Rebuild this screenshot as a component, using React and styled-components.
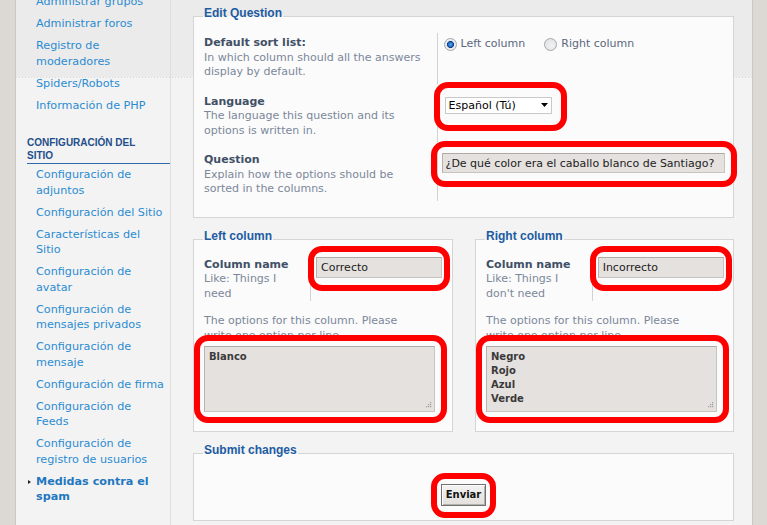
import React from 'react';
import styled, { createGlobalStyle, css } from 'styled-components';

const Global = createGlobalStyle`
  html, body { margin: 0; padding: 0; }
  body {
    font-family: "DejaVu Sans", Verdana, sans-serif;
    background: #dcd8d4;
  }
`;

const Page = styled.div`
  display: flex;
  width: 767px;
  height: 525px;
  overflow: hidden;
  background: #dcd8d4;
`;

const Gutter = styled.div`
  flex: 0 0 ${(p) => p.$w}px;
  box-sizing: border-box;
  background: #dcd8d4;
  ${(p) =>
    p.$side === 'left'
      ? 'border-right: 1px solid #cbc7c3;'
      : 'border-left: 1px solid #cbc7c3;'}
`;

const Panel = styled.div`
  flex: 1;
  display: flex;
  align-items: stretch;
  min-width: 0;
  background:
    repeating-linear-gradient(90deg, #d6d6d6 0 1px, transparent 1px 3px) 0 77px / 100% 1px no-repeat,
    linear-gradient(#ebebeb, #ebebeb) 0 0 / 100% 77px no-repeat,
    #f3f3f3;
`;

const Sidebar = styled.nav`
  flex: 0 0 155px;
  width: 155px;
  min-width: 0;
  box-sizing: border-box;
  border-right: 1px solid #dedede;
`;

const NavList = styled.ul`
  list-style: none;
  margin: -9px 0 0;
  padding: 0;
`;

const NavItem = styled.li`
  position: relative;
  padding: 3.3px 0 3.4px 20px;
  font-size: 11.2px;
  line-height: 15.4px;
  white-space: nowrap;
  color: #2b8cd2;
  ${(p) =>
    p.$active &&
    css`
      font-weight: bold;
      color: #1f78c0;
      &::before {
        content: '';
        position: absolute;
        left: 12px;
        top: 9px;
        border-left: 3px solid #222;
        border-top: 2.5px solid transparent;
        border-bottom: 2.5px solid transparent;
      }
    `}
`;

const NavHeading = styled.li`
  margin: ${(p) => p.$mt ?? 19}px 0 0 11px;
  padding-bottom: 1px;
  border-bottom: 1px solid #2e6aa8;
  font-family: "Liberation Sans", Arial, sans-serif;
  font-size: 10px;
  line-height: 13px;
  font-weight: bold;
  text-transform: uppercase;
  color: #1e4f8a;
  white-space: nowrap;
`;

const Main = styled.main`
  flex: 1;
  min-width: 0;
  padding: 6px 18px 0 22px;
`;

const Fieldset = styled.fieldset`
  margin: 0 0 11px;
  padding: ${(p) => p.$pad || '6px 10px 8px'};
  border: 1px solid #d5d5d5;
  background: #fafbfa;
  min-width: 0;
  ${(p) => p.$center && 'text-align: center;'}
`;

const Legend = styled.legend`
  padding: 0 1px 6px;
  margin-left: -1px;
  font-family: "Liberation Sans", Arial, sans-serif;
  font-size: 12px;
  line-height: 15px;
  font-weight: bold;
  color: #1d5ca3;
  text-align: left;
`;

const Columns = styled.div`
  display: grid;
  grid-template-columns: 260px 259px;
  column-gap: 22px;
`;

const Row = styled.dl`
  display: flex;
  margin: 0 0 ${(p) => p.$mb ?? 8}px;
`;

const Term = styled.dt`
  flex: 0 0 45%;
  box-sizing: border-box;
  padding: ${(p) => p.$pt ?? 3}px 0 ${(p) => p.$pb ?? 4}px;
  border-right: 1px solid #d2d2d2;
`;

const Def = styled.dd`
  flex: 1;
  min-width: 0;
  margin: 0;
  padding: ${(p) => p.$pt ?? 2}px 0 0 ${(p) => p.$pl ?? 7}px;
`;

const Label = styled.div`
  font-size: 11px;
  line-height: 14.5px;
  font-weight: bold;
  color: #425067;
`;

const Desc = styled.div`
  font-size: 11px;
  line-height: 14.5px;
  color: #7c879b;
`;

const Note = styled.p`
  margin: ${(p) => p.$mt ?? 13}px 0 0;
  font-size: 11px;
  line-height: 14.5px;
  color: #7c879b;
`;

const RadioRow = styled.div`
  display: flex;
  align-items: center;
  gap: 19px;
  padding-top: 1px;
`;

const RadioLabel = styled.label`
  display: inline-flex;
  align-items: center;
  gap: 4px;
  font-size: 11px;
  line-height: 14.5px;
  color: #5b6780;
`;

const RadioDot = styled.span`
  flex: 0 0 13px;
  width: 13px;
  height: 13px;
  box-sizing: border-box;
  border-radius: 50%;
  border: 1px solid #a3a7ad;
  background: ${(p) =>
    p.$on
      ? 'radial-gradient(circle, #5aa9f5 0, #1a5fb4 2.6px, #0c3f86 3.2px, #e6e7e8 3.8px, #fafafa 100%)'
      : 'radial-gradient(circle at 60% 60%, #f2f2f2 0, #dedede 100%)'};
`;

const Marked = styled.span`
  position: relative;
  display: ${(p) => (p.$block ? 'block' : 'inline-block')};
  vertical-align: top;
  ${(p) => p.$block && `width: ${p.$w}px;`}
`;

const Ring = styled.span`
  position: absolute;
  top: ${(p) => -p.$t}px;
  right: ${(p) => -p.$r}px;
  bottom: ${(p) => -p.$b}px;
  left: ${(p) => -p.$l}px;
  border: 6px solid #ff0000;
  border-radius: 14px;
  pointer-events: none;
  z-index: 2;
`;

const Select = styled.div`
  display: inline-flex;
  align-items: center;
  justify-content: space-between;
  box-sizing: border-box;
  width: 107px;
  height: 17px;
  padding: 0 3px 0 3px;
  border: 1px solid #c9c9c9;
  background: #fff;
  font-size: 11px;
  color: #000;
`;

const TextInput = styled.input`
  display: block;
  box-sizing: border-box;
  width: ${(p) => p.$w}px;
  height: ${(p) => p.$h}px;
  margin: 0;
  padding: 0 ${(p) => p.$px ?? 3}px;
  border: 1px solid #c8c4c0;
  border-top-color: #aeaaa6;
  border-left-color: #b6b2ae;
  background: #e5e1de;
  font-family: "DejaVu Sans", Verdana, sans-serif;
  font-size: 11px;
  color: #222;
  outline: none;
`;

const TextArea = styled.textarea`
  display: block;
  box-sizing: border-box;
  width: 100%;
  height: 66px;
  margin: 3px 0 0;
  padding: 3px 4px;
  border: 1px solid #c8c4c0;
  border-top-color: #aeaaa6;
  border-left-color: #b6b2ae;
  background: #e5e1de;
  font-family: "DejaVu Sans", Verdana, sans-serif;
  font-size: 10px;
  font-weight: bold;
  line-height: 14px;
  color: #3a3a3a;
  resize: none;
  outline: none;
  overflow: hidden;
`;

const Grip = styled.svg`
  position: absolute;
  right: 3px;
  bottom: 3px;
`;

const Button = styled.button`
  box-sizing: border-box;
  width: 45px;
  height: 22px;
  margin: 0;
  padding: 0;
  border: 1px solid #707070;
  background: linear-gradient(#f4f3f1, #e2dfdc);
  box-shadow: inset 1px 1px 0 #ffffff, inset -1px -1px 0 #b4b0ac;
  font-family: "DejaVu Sans", Verdana, sans-serif;
  font-size: 10px;
  font-weight: bold;
  color: #111;
`;

const navItems = [
  { lines: ['Administrar grupos'] },
  { lines: ['Administrar foros'] },
  { lines: ['Registro de', 'moderadores'] },
  { lines: ['Spiders/Robots'] },
  { lines: ['Información de PHP'] },
  { heading: ['Configuración del', 'Sitio'] },
  { lines: ['Configuración de', 'adjuntos'] },
  { lines: ['Configuración del Sitio'] },
  { lines: ['Características del', 'Sitio'] },
  { lines: ['Configuración de', 'avatar'] },
  { lines: ['Configuración de', 'mensajes privados'] },
  { lines: ['Configuración de', 'mensaje'] },
  { lines: ['Configuración de firma'] },
  { lines: ['Configuración de', 'Feeds'] },
  { lines: ['Configuración de', 'registro de usuarios'] },
  { lines: ['Medidas contra el', 'spam'], active: true },
  { heading: ['Configuración del', 'servidor'], mt: 26 },
];

const Lines = ({ lines }) =>
  lines.map((l, i) => (
    <React.Fragment key={i}>
      {i > 0 && <br />}
      {l}
    </React.Fragment>
  ));

const GripIcon = () => (
  <Grip width="7" height="7" viewBox="0 0 7 7">
    {[
      [5, 0],
      [3, 2],
      [5, 2],
      [1, 4],
      [3, 4],
      [5, 4],
    ].map(([x, y], i) => (
      <rect key={i} x={x} y={y} width="1.2" height="1.2" fill="#a19d99" />
    ))}
  </Grip>
);

const ColumnBox = ({ title, name, hint, options }) => (
  <Fieldset $pad="2px 10px 19px">
    <Legend>{title}</Legend>
    <Row $mb={0}>
      <Term $pt={6} $pb={0}>
        <Label>Column name</Label>
        <Desc>
          <Lines lines={hint} />
        </Desc>
      </Term>
      <Def $pt={5} $pl={5}>
        <Marked>
          <TextInput $w={126} $h={21} $px={4} defaultValue={name} readOnly />
          <Ring $t={11} $r={8} $b={13} $l={8} />
        </Marked>
      </Def>
    </Row>
    <Note>
      The options for this column. Please
      <br />
      write one option per line.
    </Note>
    <Marked $block $w={231}>
      <TextArea defaultValue={options} readOnly />
      <GripIcon />
      <Ring $t={11} $r={12} $b={11} $l={10} />
    </Marked>
  </Fieldset>
);

export default function App() {
  return (
    <>
      <Global />
      <Page>
        <Gutter $w={16} $side="left" />
        <Panel>
          <Sidebar>
            <NavList>
              {navItems.map((it, i) =>
                it.heading ? (
                  <NavHeading key={i} $mt={it.mt}>
                    <Lines lines={it.heading} />
                  </NavHeading>
                ) : (
                  <NavItem key={i} $active={it.active}>
                    <Lines lines={it.lines} />
                  </NavItem>
                )
              )}
            </NavList>
          </Sidebar>
          <Main>
            <Fieldset>
              <Legend>Edit Question</Legend>
              <Row>
                <Term>
                  <Label>Default sort list:</Label>
                  <Desc>
                    In which column should all the answers
                    <br />
                    display by default.
                  </Desc>
                </Term>
                <Def $pt={3} $pl={6}>
                  <RadioRow>
                    <RadioLabel>
                      <RadioDot $on />
                      Left column
                    </RadioLabel>
                    <RadioLabel>
                      <RadioDot />
                      Right column
                    </RadioLabel>
                  </RadioRow>
                </Def>
              </Row>
              <Row>
                <Term>
                  <Label>Language</Label>
                  <Desc>
                    The language this question and its
                    <br />
                    options is written in.
                  </Desc>
                </Term>
                <Def>
                  <Marked>
                    <Select>
                      <span>Español (Tú)</span>
                      <svg width="7" height="4" viewBox="0 0 7 4">
                        <path d="M0 0h7L3.5 4z" fill="#000" />
                      </svg>
                    </Select>
                    <Ring $t={12} $r={15} $b={17} $l={11} />
                  </Marked>
                </Def>
              </Row>
              <Row>
                <Term>
                  <Label>Question</Label>
                  <Desc>
                    Explain how the options should be
                    <br />
                    sorted in the columns.
                  </Desc>
                </Term>
                <Def $pt={3} $pl={4}>
                  <Marked>
                    <TextInput
                      $w={283}
                      $h={20}
                      defaultValue="¿De qué color era el caballo blanco de Santiago?"
                      readOnly
                    />
                    <Ring $t={12} $r={12} $b={14} $l={11} />
                  </Marked>
                </Def>
              </Row>
            </Fieldset>

            <Columns>
              <ColumnBox
                title="Left column"
                name="Correcto"
                hint={['Like: Things I', 'need']}
                options="Blanco"
              />
              <ColumnBox
                title="Right column"
                name="Incorrecto"
                hint={['Like: Things I', "don't need"]}
                options={'Negro\nRojo\nAzul\nVerde'}
              />
            </Columns>

            <Fieldset $pad="19px 10px 14px" $center>
              <Legend>Submit changes</Legend>
              <Marked>
                <Button type="button">Enviar</Button>
                <Ring $t={10} $r={10} $b={12} $l={10} />
              </Marked>
            </Fieldset>
          </Main>
        </Panel>
        <Gutter $w={15} $side="right" />
      </Page>
    </>
  );
}
